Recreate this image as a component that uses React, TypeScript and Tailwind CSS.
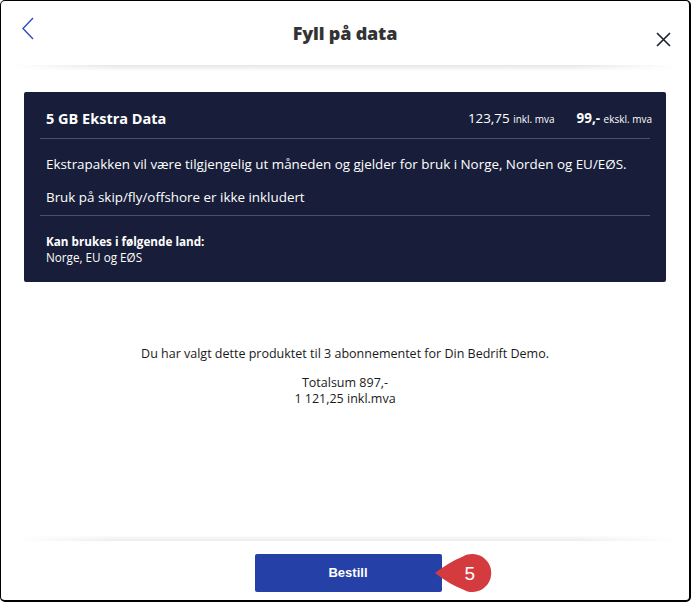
import React from "react";

const Callout = ({ n }: { n: number }) => (
  <div className="absolute left-[180px] top-0 flex h-[38px] w-[57px] items-center">
    <svg width="57" height="38" viewBox="0 0 57 38" className="absolute inset-0">
      <path d="M0 19 Q14 8 28 2.4 A19 19 0 1 1 28 35.6 Q14 30 0 19 Z" fill="#d43b3f" />
    </svg>
    <span className="relative ml-[30px] font-['Liberation_Sans',sans-serif] text-[19px] leading-none text-white">
      {n}
    </span>
  </div>
);

const App = () => {
  return (
    <div className="flex h-[602px] w-[691px] flex-col overflow-hidden rounded-[5px] border-t border-l border-r-2 border-b-2 border-black bg-white font-['Open_Sans',sans-serif] text-[#222]">
      <header className="grid h-[64px] shrink-0 grid-cols-[1fr_auto_1fr] items-start px-[20px]">
        <button aria-label="Tilbake" className="mt-[16px] justify-self-start">
          <svg width="14" height="23" viewBox="0 0 14 23" fill="none">
            <path d="M12 1 L2 11.5 L12 22" stroke="#2a4cc4" strokeWidth="1.4" />
          </svg>
        </button>
        <h1 className="mt-[21px] text-[18px] font-extrabold leading-[22px] tracking-[-0.2px] text-[#333]">Fyll på data</h1>
        <button aria-label="Lukk" className="mt-[31px] mr-[-2px] justify-self-end">
          <svg width="15" height="15" viewBox="0 0 15 15" fill="none">
            <path d="M1 1 L14 14 M14 1 L1 14" stroke="#1b1f2e" strokeWidth="1.6" />
          </svg>
        </button>
      </header>

      <div className="mx-[12px] h-[6px] shrink-0 bg-gradient-to-b from-[#e6e6e6] to-white [mask-image:linear-gradient(to_right,transparent,black_15%,black_85%,transparent)]" />

      <section className="mx-[23px] mt-[21px] rounded-[2px] bg-[#181e39] text-white">
        <div className="flex items-center justify-between px-[22px] pt-[16px] pb-[9px] leading-[20px]">
          <h2 className="text-[14.5px] font-bold">5 GB Ekstra Data</h2>
          <div className="mr-[-8px] flex items-baseline gap-[22px] text-[13.4px]">
            <span>
              123,75 <span className="text-[10px]">inkl. mva</span>
            </span>
            <span>
              <span className="font-bold">99,-</span> <span className="text-[10px]">ekskl. mva</span>
            </span>
          </div>
        </div>
        <div className="mx-[16px] h-px bg-[#4c5168]" />
        <div className="px-[22px] pt-[15px] pb-[8px] text-[13.4px] leading-[20px]">
          <p>Ekstrapakken vil være tilgjengelig ut måneden og gjelder for bruk i Norge, Norden og EU/EØS.</p>
          <p className="mt-[13px]">Bruk på skip/fly/offshore er ikke inkludert</p>
        </div>
        <div className="mx-[16px] h-px bg-[#4c5168]" />
        <div className="px-[22px] pt-[17px] pb-[17px] text-[11.7px] leading-[16px]">
          <p className="font-bold">Kan brukes i følgende land:</p>
          <p>Norge, EU og EØS</p>
        </div>
      </section>

      <div className="mt-[64px] flex flex-col items-center text-center text-[12.5px] leading-[16px] text-[#1a1a1a]">
        <p>Du har valgt dette produktet til 3 abonnementet for Din Bedrift Demo.</p>
        <p className="mt-[13px]">Totalsum 897,-</p>
        <p>1 121,25 inkl.mva</p>
      </div>

      <div className="flex-1" />

      <div className="mx-[12px] h-[6px] shrink-0 bg-gradient-to-b from-white to-[#ececec] [mask-image:linear-gradient(to_right,transparent,black_15%,black_85%,transparent)]" />

      <footer className="flex shrink-0 justify-center pt-[13px] pb-[8px]">
        <div className="relative ml-[6px]">
          <button className="h-[38px] w-[187px] rounded-[2px] bg-[#2541a8] font-['Liberation_Sans',sans-serif] text-[13px] font-bold text-white">
            Bestill
          </button>
          <Callout n={5} />
        </div>
      </footer>
    </div>
  );
};

export default App;
